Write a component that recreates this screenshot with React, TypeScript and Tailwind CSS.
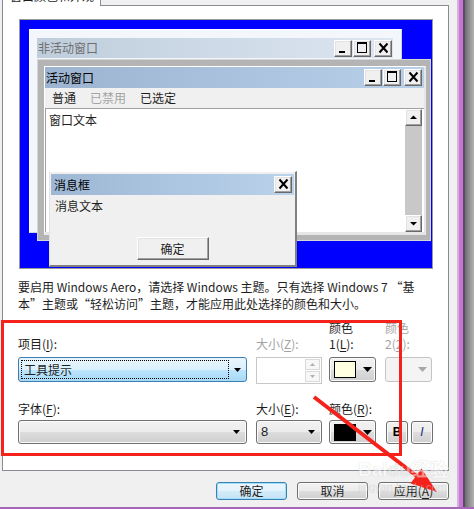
import React from "react";

const classicBtn =
   "border border-t-white border-l-white border-r-[#696969] border-b-[#696969] bg-[#f0f0f0] shadow-[inset_-1px_-1px_0_#a0a0a0,inset_1px_1px_0_#e3e3e3]";

const win7Btn =
   "rounded-[3px] border border-[#707070] bg-[linear-gradient(#f2f2f2,#ebebeb_50%,#dddddd_50%,#cfcfcf)] shadow-[inset_0_0_0_1px_#fbfbfb]";

const TitleButton = ({ kind }: { kind: "min" | "max" | "close" }) => (
   <div className={`h-[17px] w-[18px] ${classicBtn}`}>
      <svg width="16" height="15" viewBox="0 0 16 15">
         {kind === "min" && <rect x="4" y="10" width="6" height="2" fill="#000" />}
         {kind === "max" && (
            <path d="M3 1h10v11H3z M4 3v8h8V3z" fill="#000" fillRule="evenodd" />
         )}
         {kind === "close" && (
            <path d="M4.5 2.5l8 9M12.5 2.5l-8 9" stroke="#000" strokeWidth="2" />
         )}
      </svg>
   </div>
);

const ScrollButton = ({ up }: { up?: boolean }) => (
   <div className={`h-[17px] w-[17px] ${classicBtn}`}>
      <svg width="15" height="15" viewBox="0 0 15 15">
         {up ? <path d="M4 9h7L7.5 5.5z" fill="#000" /> : <path d="M4 6h7L7.5 9.5z" fill="#000" />}
      </svg>
   </div>
);

const DownArrow = ({ color = "#000", w = 7, h = 4 }: { color?: string; w?: number; h?: number }) => (
   <svg width={w} height={h} viewBox={`0 0 ${w} ${h}`}>
      <path d={`M0 0h${w}l-${w / 2} ${h}z`} fill={color} />
   </svg>
);

const Key = ({ children }: { children: React.ReactNode }) => (
   <span className="underline underline-offset-2">{children}</span>
);

const Preview = () => (
   <div className="ml-[16px] h-[250px] w-[414px] border border-[#9a9a9a]">
      <div className="relative h-full w-full bg-[#0000ff]">
         {/* inactive window */}
         <div className="absolute left-[9px] top-[9px] h-[204px] w-[373px] border border-[#cfd4da] border-l-white border-t-white bg-[#f3f6fa] pl-[7px] pr-[8px] pt-[8px]">
            <div className="flex h-[20px] items-center justify-between bg-[linear-gradient(90deg,#bfcddc,#dce6f1)] pl-[1px] pr-[1px]">
               <span className="text-[#6f6f6f]">非活动窗口</span>
               <div className="flex items-center">
                  <TitleButton kind="min" />
                  <div className="ml-[1px]">
                     <TitleButton kind="max" />
                  </div>
                  <div className="ml-[3px]">
                     <TitleButton kind="close" />
                  </div>
               </div>
            </div>
         </div>

         {/* active window */}
         <div className="absolute left-[17px] top-[39px] h-[182px] w-[394px] border border-[#d6d6d6] bg-[#b4b4b4] pb-[5px] pl-[6px] pr-[4px] pt-[6px]">
            <div className="flex h-full flex-col border-b-[3px] border-l border-r-2 border-t border-[#e6e6e6] border-l-white border-t-white bg-[#f0f0f0]">
               <div className="flex h-[21px] items-center justify-between bg-[linear-gradient(90deg,#9cb4d1,#b8d0e9)] pl-[1px] pr-[2px]">
                  <span className="text-black">活动窗口</span>
                  <div className="flex items-center">
                     <TitleButton kind="min" />
                     <div className="ml-[1px]">
                        <TitleButton kind="max" />
                     </div>
                     <div className="ml-[3px]">
                        <TitleButton kind="close" />
                     </div>
                  </div>
               </div>
               <div className="flex h-[20px] items-center gap-[14px] pl-[7px]">
                  <span>普通</span>
                  <span className="text-[#a3a3a3]">已禁用</span>
                  <span>已选定</span>
               </div>
               <div className="flex flex-1 border-l border-t border-[#a0a0a0] bg-white pr-[2px]">
                  <div className="flex-1 pl-[3px] pt-[3px]">窗口文本</div>
                  <div className="flex w-[17px] flex-col bg-[#c8c8c8]">
                     <ScrollButton up />
                     <div className="flex-1" />
                     <ScrollButton />
                  </div>
               </div>
            </div>
         </div>

         {/* message box */}
         <div className="absolute left-[29px] top-[151px] flex h-[96px] w-[248px] flex-col border-b-2 border-l border-r-2 border-t border-[#808080] border-l-[#e3e3e3] border-t-white bg-[#f0f0f0] pl-[1px] pr-[1px] pt-[2px]">
            <div className="flex h-[21px] items-center justify-between bg-[linear-gradient(90deg,#9db7d4,#bad2eb)] pl-[3px] pr-[2px]">
               <span className="text-black">消息框</span>
               <TitleButton kind="close" />
            </div>
            <div className="pl-[4px] pt-[3px]">消息文本</div>
            <div className="mt-[23px] flex justify-center">
               <div className={`flex h-[23px] w-[72px] items-center justify-center ${classicBtn}`}>确定</div>
            </div>
         </div>
      </div>
   </div>
);

const Form = () => (
   <div className="mt-[8px] pl-[15px]">
      <div className="flex items-end">
         <div className="w-[229px]">
            项目(<Key>I</Key>):
         </div>
         <div className="ml-[9px] w-[66px] text-[#a3a3a3]">
            大小(<Key>Z</Key>):
         </div>
         <div className="ml-[7px] w-[47px]">
            <div>颜色</div>
            <div>
               1(<Key>L</Key>):
            </div>
         </div>
         <div className="ml-[9px] w-[47px] text-[#a3a3a3]">
            <div>颜色</div>
            <div>
               2(<Key>2</Key>):
            </div>
         </div>
      </div>

      <div className="mt-[5px] flex items-start">
         <div className="flex h-[25px] w-[229px] items-center rounded-[3px] border border-[#3c7fb1] bg-[linear-gradient(#eaf6fd,#d9f0fc_50%,#bee6fd_50%,#a7d9f5)] pl-[2px] pr-[5px]">
            <div className="flex h-[19px] w-[208px] items-center border border-dotted border-black pl-[2px]">
               工具提示
            </div>
            <div className="ml-auto">
               <DownArrow />
            </div>
         </div>
         <div className="ml-[9px] flex h-[27px] w-[66px] justify-end border border-[#c8c8c8] bg-white p-[1px]">
            <div className="flex w-[15px] flex-col gap-[1px]">
               <div className="flex flex-1 items-center justify-center border border-[#dadada] bg-[#f7f7f7]">
                  <svg width="5" height="3" viewBox="0 0 5 3">
                     <path d="M0 3h5L2.5 0z" fill="#b0b0b0" />
                  </svg>
               </div>
               <div className="flex flex-1 items-center justify-center border border-[#dadada] bg-[#f7f7f7]">
                  <DownArrow color="#b0b0b0" w={5} h={3} />
               </div>
            </div>
         </div>
         <div className={`ml-[7px] flex h-[25px] w-[47px] items-center pl-[4px] ${win7Btn}`}>
            <div className="h-[17px] w-[22px] border border-black bg-[#ffffe1]" />
            <div className="ml-[7px]">
               <DownArrow w={9} h={5} />
            </div>
         </div>
         <div className="ml-[9px] flex h-[25px] w-[47px] items-center justify-end rounded-[3px] border border-[#c4c4c4] bg-[#f4f4f4] pr-[4px]">
            <DownArrow color="#a8a8a8" w={9} h={5} />
         </div>
      </div>

      <div className="mt-[17px] flex">
         <div className="w-[229px]">
            字体(<Key>F</Key>):
         </div>
         <div className="ml-[9px] w-[66px]">
            大小(<Key>E</Key>):
         </div>
         <div className="ml-[7px]">
            颜色(<Key>R</Key>):
         </div>
      </div>

      <div className="mt-[3px] flex items-center">
         <div className={`flex h-[24px] w-[229px] items-center justify-end pr-[6px] ${win7Btn}`}>
            <DownArrow />
         </div>
         <div className={`ml-[9px] flex h-[24px] w-[66px] items-center pl-[4px] pr-[6px] ${win7Btn}`}>
            <span className="font-['Liberation_Sans',sans-serif] text-[13px]">8</span>
            <div className="ml-auto">
               <DownArrow />
            </div>
         </div>
         <div className={`ml-[7px] flex h-[24px] w-[47px] items-center pl-[4px] ${win7Btn}`}>
            <div className="h-[17px] w-[22px] border border-black bg-black" />
            <div className="ml-[7px]">
               <DownArrow w={9} h={5} />
            </div>
         </div>
         <div className={`ml-[10px] flex h-[23px] w-[22px] items-center justify-center font-['Liberation_Sans',sans-serif] text-[12px] font-bold text-black ${win7Btn}`}>
            B
         </div>
         <div className={`ml-[3px] flex h-[23px] w-[22px] items-center justify-center font-['Liberation_Sans',sans-serif] text-[12px] italic text-[#1a2a80] ${win7Btn}`}>
            I
         </div>
      </div>
   </div>
);

const Annotations = () => (
   <svg className="pointer-events-none absolute left-0 top-0" width="474" height="509" viewBox="0 0 474 509">
      <rect x="2.5" y="321.5" width="398" height="133" fill="none" stroke="#f4221a" strokeWidth="3" />
      <line x1="314" y1="397" x2="418" y2="477" stroke="#f4221a" strokeWidth="4" />
      <path d="M437 492L410.5 483.5L421.5 468.5z" fill="#f4221a" />
   </svg>
);

const Watermark = () => (
   <div className="pointer-events-none absolute left-[358px] top-[459px] flex flex-col items-start opacity-50">
      <span className="font-['Liberation_Sans',sans-serif] text-[19px] font-bold leading-[22px] text-white [text-shadow:0_0_1px_#9a9a9a]">
         Bai<span className="text-[#e8e8e8]">du</span>经验
      </span>
      <span className="font-['Liberation_Sans',sans-serif] text-[11px] leading-[12px] text-[#cfcfcf]">
         jingyan.baidu.com
      </span>
   </div>
);

export default function App() {
   return (
      <div className="relative flex h-[509px] w-[474px] flex-col overflow-hidden bg-[#f0f0f0] font-['Noto_Sans_CJK_SC',sans-serif] text-[12px] leading-[16px] text-[#1e1e1e]">
         <div className="flex h-[507px]">
            <div className="flex w-[457px] flex-col">
               {/* tab strip */}
               <div className="flex h-[6px]">
                  <div className="w-[2px]" />
                  <div className="h-[6px] w-[99px] overflow-hidden border-x border-[#898c95] bg-white">
                     <div className="-mt-[12px] whitespace-nowrap pl-[7px]">窗口颜色和外观</div>
                  </div>
                  <div className="w-[348px] border-b border-[#898c95]" />
               </div>

               {/* tab page */}
               <div className="ml-[2px] h-[465px] w-[447px] border-x border-b border-[#898c95] bg-white pt-[13px]">
                  <Preview />
                  <div className="mt-[9px] whitespace-nowrap pl-[15px] leading-[17px]">
                     <div>要启用 Windows Aero，请选择 Windows 主题。只有选择 Windows 7 “基</div>
                     <div>本”主题或“轻松访问”主题，才能应用此处选择的颜色和大小。</div>
                  </div>
                  <Form />
               </div>

               {/* dialog buttons */}
               <div className="mt-[11px] flex justify-end gap-[10px] pr-[8px]">
                  <div className="flex h-[18px] w-[71px] items-center justify-center rounded-[3px] border border-[#3c7fb1] bg-[linear-gradient(#eaf6fd,#e4f3fc_50%,#d2ebf9_50%,#c6e4f6)] shadow-[inset_0_0_0_1px_#9ee0fb]">
                     确定
                  </div>
                  <div className={`flex h-[18px] w-[71px] items-center justify-center ${win7Btn}`}>取消</div>
                  <div className={`flex h-[18px] w-[71px] items-center justify-center ${win7Btn}`}>
                     应用(<Key>A</Key>)
                  </div>
               </div>
            </div>

            {/* window frame on the right */}
            <div className="flex w-[17px]">
               <div className="w-[2px] bg-[#d6b0de]" />
               <div className="w-[4px] bg-[#c676d6]" />
               <div className="w-[2px] bg-[#5b4a60]" />
               <div className="flex-1 bg-[linear-gradient(90deg,#6e6e6e,#b4b4b4)]" />
            </div>
         </div>
         <div className="h-[2px] bg-[#a868b8]" />

         <Annotations />
         <Watermark />
      </div>
   );
}
